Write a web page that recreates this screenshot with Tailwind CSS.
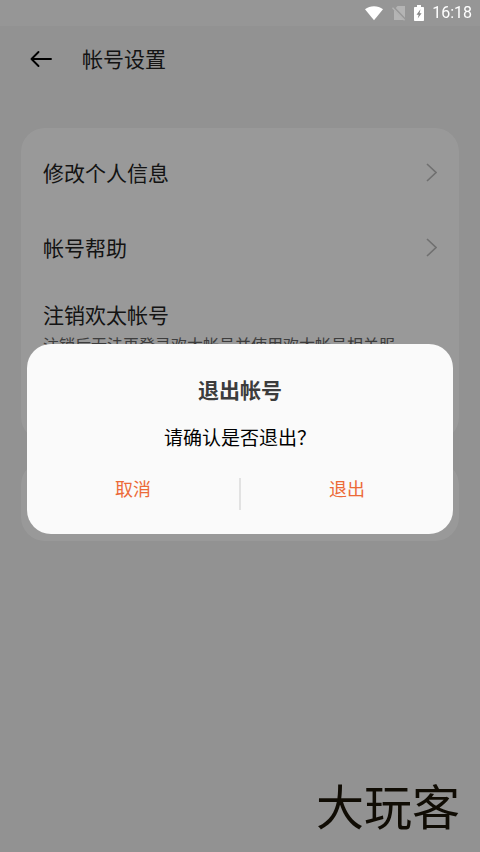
<!DOCTYPE html>
<html lang="zh-CN">
<head>
<meta charset="utf-8">
<meta name="viewport" content="width=device-width, initial-scale=1">
<title>帐号设置</title>
<script src="https://cdn.jsdelivr.net/npm/@tailwindcss/browser@4"></script>
</head>
<body class="min-h-screen bg-[#f3f3f3] font-['Noto_Sans_CJK_SC',sans-serif] text-black">

<!-- System status bar -->
<div class="fixed inset-x-0 top-0 z-20 flex h-[26px] items-center justify-end bg-white/4 pr-2 text-white">
  <svg class="mr-2 h-4 w-5" viewBox="0 0 20 16" fill="currentColor" aria-hidden="true"><path d="M1 4.200C6 .2 14 .2 19 4.200L10 15.200Z"/></svg>
  <svg class="mr-2 h-4 w-3.5 text-[#b4b4b4]" viewBox="0 0 14 16" aria-hidden="true"><path fill="currentColor" d="M5.500 1H13v14H2V5Z"/><path d="M1 2l12.500 13" stroke="#979797" stroke-width="2.600"/><path d="M.5 2.800l12 12.500" stroke="currentColor" stroke-width="1.300"/></svg>
  <svg class="mr-2 h-4 w-2.5" viewBox="0 0 10 16" aria-hidden="true"><path fill="currentColor" d="M3 0h4v2h2.200q.8 0 .8.800v12.400q0 .8-.8.800H.8q-.8 0-.8-.8V2.800Q0 2 .8 2H3Z"/><path d="M6.500 4.200 2.500 9.700h2.200L3.700 13.500 7.600 8.200H5.500Z" fill="#858585"/></svg>
  <time class="font-[Roboto,sans-serif] text-base leading-5">16:18</time>
</div>

<header class="mt-[26px] flex h-16 items-center pl-[29px]">
  <button type="button" aria-label="返回" class="mr-[29px]">
    <svg class="h-6 w-6" viewBox="0 0 24 24" fill="none" stroke="currentColor" stroke-width="1.900" stroke-linecap="round" stroke-linejoin="round"><path d="M9.500 6 2.500 13l7 7M2.500 13H22"/></svg>
  </button>
  <h1 class="text-[21px] leading-8 text-[#222]">帐号设置</h1>
</header>

<main class="mt-[38px] flex flex-col gap-5 px-[21px]">
  <section class="rounded-3xl bg-white px-[22px] py-[6px] text-[#222]">
    <a href="#profile" class="flex h-[75px] items-center justify-between text-[21px] leading-8">修改个人信息
      <svg class="h-5 w-5 text-[#bbb]" viewBox="0 0 20 20" fill="none" stroke="currentColor" stroke-width="1.600" aria-hidden="true"><path d="M10 2 19 10.500 10 19"/></svg>
    </a>
    <a href="#help" class="flex h-[75px] items-center justify-between text-[21px] leading-8">帐号帮助
      <svg class="h-5 w-5 text-[#bbb]" viewBox="0 0 20 20" fill="none" stroke="currentColor" stroke-width="1.600" aria-hidden="true"><path d="M10 2 19 10.500 10 19"/></svg>
    </a>
    <a href="#cancel-account" class="block h-[151px] pt-[14px]">
      <span class="block text-[21px] leading-8">注销欢太帐号</span>
      <span class="block text-base leading-7 text-[#666]">注销后无法再登录欢太帐号并使用欢太帐号相关服</span>
    </a>
  </section>
  <section class="h-20 rounded-3xl bg-white"></section>
</main>

<!-- Dimmed layer with the confirmation dialog -->
<div class="fixed inset-0 z-10 flex items-center justify-center bg-black/40 px-[27px] pt-[26px]">
  <section role="dialog" aria-modal="true" aria-labelledby="dialog-title" class="w-full rounded-3xl bg-[#fafafa] pt-[29px] pb-6 text-center">
    <h2 id="dialog-title" class="text-[21px] leading-8 font-bold text-[#3c3c3c]">退出帐号</h2>
    <p class="mt-4 text-[19px] leading-8">请确认是否退出？</p>
    <div class="mt-[25px] flex items-start text-lg text-[#ec6a38]">
      <button type="button" class="flex-1 leading-5">取消</button>
      <span class="h-8 w-0.5 bg-[#e2e2e2]"></span>
      <button type="button" class="flex-1 leading-5">退出</button>
    </div>
  </section>
</div>

<div class="fixed right-5 bottom-[18px] z-20 text-[48px] leading-[60px] text-[#100c04]">大玩客</div>
</body>
</html>
